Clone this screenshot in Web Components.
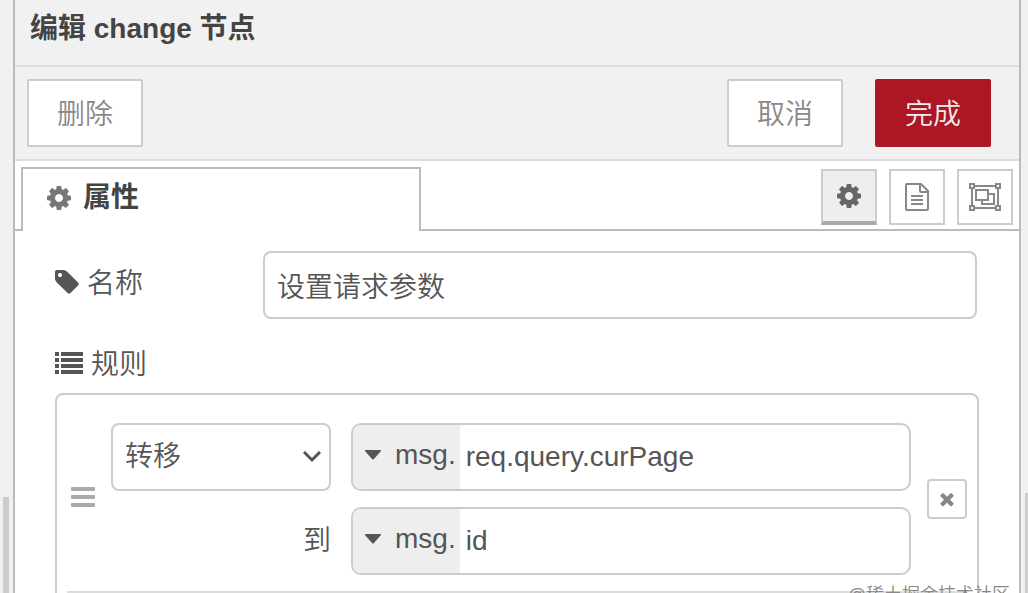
<!DOCTYPE html>
<html lang="zh-CN">
<head>
<meta charset="utf-8">
<meta name="viewport" content="width=device-width, initial-scale=1">
<title>编辑 change 节点</title>
<style>
  :root {
    --border-color: #ccc;
    --tab-border: #bbb;
    --bar-color: #f1f1f1;
    --text-color: #555;
    --strong-color: #444;
    --muted-color: #888;
    --primary-color: #ad1625;
    --text-weight: 350;
  }

  body {
    margin: 0;
    height: 100vh;
    overflow: hidden;
    font: 28px/40px "Liberation Sans", "Noto Sans CJK SC", sans-serif;
    color: var(--text-color);
    background: var(--bar-color);
  }
</style>
</head>
<body>
<editor-page></editor-page>

<script>
const COG = "M1152 896q0-106-75-181t-181-75-181 75-75 181 75 181 181 75 181-75 75-181zm512-109v222q0 12-8 23t-20 13l-185 28q-19 54-39 91 35 50 107 138 10 12 10 25t-9 23q-27 37-99 108t-94 71q-12 0-26-9l-138-108q-44 23-91 38-16 136-29 186-7 28-36 28h-222q-14 0-24.5-8.5t-11.5-21.5l-28-184q-49-16-90-37l-141 107q-10 9-25 9-14 0-25-11-126-114-165-168-7-10-7-23 0-12 8-23 15-21 51-66.5t54-70.5q-27-50-41-99l-183-27q-13-2-21-12.5t-8-23.5v-222q0-12 8-23t19-13l186-28q14-46 39-92-40-57-107-138-10-12-10-24 0-10 9-23 26-36 98.5-107.5t94.5-71.5q13 0 26 10l138 107q44-23 91-38 16-136 29-186 7-28 36-28h222q14 0 24.5 8.5t11.5 21.5l28 184q49 16 90 37l142-107q9-9 24-9 13 0 25 10 129 119 165 170 7 8 7 22 0 12-8 23-15 21-51 66.5t-54 70.5q26 50 41 98l183 28q13 2 21 12.5t8 23.5z";

// name: [width, height, viewBox, markup]
const ICONS = {
  cog: [24, 24, "128 128 1536 1536", `<path d="${COG}"/>`],
  tag: [24, 24, "128 128 1536 1536", `<path d="M576 448q0-53-37.5-90.5t-90.5-37.5-90.5 37.5-37.5 90.5 37.5 90.5 90.5 37.5 90.5-37.5 37.5-90.5zm1067 576q0 53-37 90l-491 492q-39 37-91 37-53 0-90-37l-715-716q-38-37-64.5-101t-26.5-117v-416q0-52 38-90t90-38h416q53 0 117 26.5t102 64.5l715 714q37 39 37 91z"/>`],
  list: [28, 22, "0 0 28 22", `<path d="M0 0h4v4H0zM6 0h22v4H6zM0 6h4v4H0zM6 6h22v4H6zM0 12h4v4H0zM6 12h22v4H6zM0 18h4v4H0zM6 18h22v4H6z"/>`],
  bars: [24, 28, "0 0 24 28", `<rect y="2" width="24" height="4" rx="1"/><rect y="10" width="24" height="4" rx="1"/><rect y="18" width="24" height="4" rx="1"/>`],
  caret: [16, 10, "0 0 16 10", `<path d="M0 0h16v1L9 9q-1 1-2 0L0 1z"/>`],
  chevron: [18, 12, "0 0 18 12", `<path d="M2 2l7 7 7-7" fill="none" stroke="currentColor" stroke-width="3" stroke-linecap="square"/>`],
  times: [20, 20, "0 0 1792 1792", `<path d="M1490 1322q0 40-28 68l-136 136q-28 28-68 28t-68-28l-294-294-294 294q-28 28-68 28t-68-28l-136-136q-28-28-28-68t28-68l294-294-294-294q-28-28-28-68t28-68l136-136q28-28 68-28t68 28l294 294 294-294q28-28 68-28t68 28l136 136q28 28 28 68t-28 68l-294 294 294 294q28 28 28 68z"/>`],
  file: [24, 28, "0 0 24 28", `<path d="M2 1h14l7 7v18q0 1-1 1H2q-1 0-1-1V2q0-1 1-1zM15 1v7q0 1 1 1h7M6 13h12M6 17h12M6 21h12" fill="none" stroke="currentColor" stroke-width="2"/>`],
  group: [32, 28, "0 0 32 28", `<path d="M1 1h4v4H1zM27 1h4v4h-4zM1 23h4v4H1zM27 23h4v4h-4zM5 3h22M5 25h22M3 5v18M29 5v18M7 7h12v10H7zM19 11h6v10H13v-4" fill="none" stroke="currentColor" stroke-width="2"/>`]
};

class FaIcon extends HTMLElement {
  constructor() {
    super();
    this.attachShadow({ mode: "open" });
  }
  connectedCallback() {
    const [width, height, box, markup] = ICONS[this.getAttribute("name")];
    this.shadowRoot.innerHTML = `
    <style>
      :host {
        display: block;
        flex: none;
      }
      svg {
        display: block;
        fill: currentColor;
      }
    </style>
    <svg width="${width}" height="${height}" viewBox="${box}" aria-hidden="true">${markup}</svg>
    `;
  }
}

class TrayButton extends HTMLElement {
  constructor() {
    super();
    this.attachShadow({ mode: "open" });
  }
  connectedCallback() {
    this.shadowRoot.innerHTML = `
    <style>
      :host {
        display: block;
      }
      button {
        display: block;
        box-sizing: border-box;
        height: 68px;
        padding: 4px 28px 0;
        border: 2px solid var(--border-color);
        border-radius: 2px;
        background: white;
        color: var(--muted-color);
        font: inherit;
        font-weight: var(--text-weight);
      }
      :host([primary]) button {
        border-color: var(--primary-color);
        background: var(--primary-color);
        color: #eee;
      }
    </style>
    <button type="button"><slot></slot></button>
    `;
  }
}

class TrayTabs extends HTMLElement {
  constructor() {
    super();
    this.attachShadow({ mode: "open" });
  }
  connectedCallback() {
    this.shadowRoot.innerHTML = `
    <style>
      :host {
        display: flex;
        align-items: flex-end;
        padding-top: 6px;
      }
      .edge {
        flex: none;
        box-sizing: border-box;
        width: 6px;
        border-bottom: 2px solid var(--tab-border);
      }
      .tab {
        flex: 0 1 400px;
        box-sizing: border-box;
        display: flex;
        align-items: center;
        gap: 12px;
        height: 64px;
        padding: 0 24px 4px;
        border: 2px solid var(--tab-border);
        border-bottom: 0;
        background: white;
        color: var(--strong-color);
        font: inherit;
        font-weight: bold;
      }
      .tab fa-icon {
        color: #777;
      }
      .tools {
        flex: 1;
        display: flex;
        justify-content: flex-end;
        gap: 12px;
        padding: 0 6px 4px 0;
        border-bottom: 2px solid var(--tab-border);
      }
      .tools button {
        box-sizing: border-box;
        display: flex;
        align-items: center;
        justify-content: center;
        width: 56px;
        height: 56px;
        padding: 0;
        border: 2px solid var(--border-color);
        background: white;
        color: var(--muted-color);
      }
      .tools .selected {
        border-bottom: 4px solid #aaa;
        background: #eee;
        color: #666;
      }
    </style>
    <span class="edge"></span>
    <button type="button" class="tab"><fa-icon name="cog"></fa-icon>属性</button>
    <div class="tools">
      <button type="button" class="selected" aria-label="properties"><fa-icon name="cog"></fa-icon></button>
      <button type="button" aria-label="description"><fa-icon name="file"></fa-icon></button>
      <button type="button" aria-label="appearance"><fa-icon name="group"></fa-icon></button>
    </div>
    `;
  }
}

class NameRow extends HTMLElement {
  constructor() {
    super();
    this.attachShadow({ mode: "open" });
  }
  connectedCallback() {
    this.shadowRoot.innerHTML = `
    <style>
      :host {
        display: flex;
        font-weight: var(--text-weight);
      }
      label {
        flex: none;
        display: flex;
        align-items: center;
        gap: 8px;
        width: 208px;
        height: 62px;
        line-height: 44px;
      }
      label span {
        padding-top: 4px;
      }
      input {
        flex: 1;
        min-width: 0;
        box-sizing: border-box;
        height: 68px;
        padding: 0 12px;
        border: 2px solid var(--border-color);
        border-radius: 8px;
        background: white;
        color: inherit;
        font: inherit;
      }
    </style>
    <label for="name"><fa-icon name="tag"></fa-icon><span>名称</span></label>
    <input type="text" id="name" value="${this.getAttribute("value")}">
    `;
  }
}

class TypedInput extends HTMLElement {
  constructor() {
    super();
    this.attachShadow({ mode: "open" });
  }
  connectedCallback() {
    this.shadowRoot.innerHTML = `
    <style>
      :host {
        display: flex;
        align-items: stretch;
        box-sizing: border-box;
        height: 68px;
        border: 2px solid var(--border-color);
        border-radius: 10px;
        overflow: hidden;
        background: white;
      }
      button {
        flex: none;
        display: flex;
        align-items: center;
        gap: 14px;
        padding: 0 4px 4px 12px;
        border: 0;
        background: #eee;
        color: inherit;
        font: inherit;
      }
      input {
        flex: 1;
        min-width: 0;
        padding: 0 6px;
        border: 0;
        background: none;
        color: inherit;
        font: inherit;
      }
    </style>
    <button type="button"><fa-icon name="caret"></fa-icon>msg.</button>
    <input type="text" aria-label="${this.getAttribute("label")}" value="${this.getAttribute("value")}">
    `;
  }
}

class RuleItem extends HTMLElement {
  constructor() {
    super();
    this.attachShadow({ mode: "open" });
  }
  connectedCallback() {
    this.shadowRoot.innerHTML = `
    <style>
      :host {
        display: flex;
        align-items: center;
        gap: 16px;
        margin: 0 10px;
        padding: 28px 0 16px 4px;
        border-bottom: 2px solid #ddd;
        font-weight: var(--text-weight);
      }
      .handle {
        color: #aaa;
      }
      .fields {
        flex: 1;
        display: grid;
        grid-template-columns: 220px 1fr;
        gap: 16px 20px;
        align-items: center;
      }
      .pick {
        display: grid;
        align-items: center;
      }
      .pick > * {
        grid-area: 1 / 1;
      }
      .pick fa-icon {
        justify-self: end;
        margin-right: 10px;
        pointer-events: none;
      }
      select {
        box-sizing: border-box;
        width: 100%;
        height: 68px;
        padding: 0 12px;
        border: 2px solid var(--border-color);
        border-radius: 8px;
        background: white;
        color: inherit;
        font: inherit;
        appearance: none;
      }
      .to {
        text-align: right;
      }
      .remove {
        display: flex;
        align-items: center;
        justify-content: center;
        box-sizing: border-box;
        width: 40px;
        height: 40px;
        padding: 0;
        border: 2px solid var(--border-color);
        border-radius: 4px;
        background: white;
        color: var(--muted-color);
      }
    </style>
    <fa-icon class="handle" name="bars"></fa-icon>
    <div class="fields">
      <div class="pick">
        <select aria-label="规则">
          <option>转移</option>
        </select>
        <fa-icon name="chevron"></fa-icon>
      </div>
      <typed-input label="转移" value="req.query.curPage"></typed-input>
      <span class="to">到</span>
      <typed-input label="到" value="id"></typed-input>
    </div>
    <button type="button" class="remove" aria-label="remove"><fa-icon name="times"></fa-icon></button>
    `;
  }
}

class RuleList extends HTMLElement {
  constructor() {
    super();
    this.attachShadow({ mode: "open" });
  }
  connectedCallback() {
    this.shadowRoot.innerHTML = `
    <style>
      :host {
        display: block;
      }
      .title {
        display: flex;
        align-items: center;
        gap: 8px;
        height: 60px;
        line-height: 44px;
        font-weight: var(--text-weight);
      }
      .title span {
        padding-top: 4px;
      }
      .box {
        margin-right: -2px;
        min-height: 400px;
        border: 2px solid var(--border-color);
        border-radius: 8px;
      }
    </style>
    <div class="title"><fa-icon name="list"></fa-icon><span>规则</span></div>
    <div class="box"><slot></slot></div>
    `;
  }
}

class EditTray extends HTMLElement {
  constructor() {
    super();
    this.attachShadow({ mode: "open" });
  }
  connectedCallback() {
    this.shadowRoot.innerHTML = `
    <style>
      :host {
        display: block;
        overflow: hidden;
        background: white;
        border: solid var(--tab-border);
        border-width: 0 2px;
      }
      header {
        box-sizing: border-box;
        height: 67px;
        padding: 9px 15px;
        border-bottom: 2px solid #ddd;
        background: var(--bar-color);
      }
      h1 {
        margin: 0;
        color: var(--strong-color);
        font-size: 28px;
        line-height: 40px;
      }
      .toolbar {
        display: flex;
        gap: 32px;
        padding: 12px 28px 12px 12px;
        border-bottom: 2px solid #ddd;
        background: var(--bar-color);
      }
      .toolbar :first-child {
        margin-right: auto;
      }
      form {
        display: flex;
        flex-direction: column;
        gap: 14px;
        padding: 20px 42px 0 40px;
      }
    </style>
    <header><h1>编辑 change 节点</h1></header>
    <div class="toolbar">
      <tray-button>删除</tray-button>
      <tray-button>取消</tray-button>
      <tray-button primary>完成</tray-button>
    </div>
    <tray-tabs></tray-tabs>
    <form>
      <name-row value="设置请求参数"></name-row>
      <rule-list><rule-item></rule-item></rule-list>
    </form>
    `;
  }
}

class EditorPage extends HTMLElement {
  constructor() {
    super();
    this.attachShadow({ mode: "open" });
  }
  connectedCallback() {
    this.shadowRoot.innerHTML = `
    <style>
      :host {
        display: flex;
        position: relative;
        height: 100%;
      }
      .gutter {
        flex: none;
        display: flex;
        align-items: flex-end;
        justify-content: flex-end;
        box-sizing: border-box;
        width: 13px;
        padding-right: 4px;
      }
      .gutter.right {
        width: 7px;
        padding: 0;
      }
      .thumb {
        width: 6px;
        height: 96px;
        background: #ccc;
      }
      .right .thumb {
        width: 3px;
        height: 100px;
      }
      edit-tray {
        flex: 1;
        min-width: 0;
      }
      .mark {
        position: absolute;
        right: 18px;
        bottom: -16px;
        color: #888;
        font-size: 18px;
        line-height: 28px;
        font-weight: var(--text-weight);
      }
    </style>
    <div class="gutter"><div class="thumb"></div></div>
    <edit-tray></edit-tray>
    <div class="gutter right"><div class="thumb"></div></div>
    <span class="mark">@稀土掘金技术社区</span>
    `;
  }
}

customElements.define("fa-icon", FaIcon);
customElements.define("tray-button", TrayButton);
customElements.define("tray-tabs", TrayTabs);
customElements.define("name-row", NameRow);
customElements.define("typed-input", TypedInput);
customElements.define("rule-item", RuleItem);
customElements.define("rule-list", RuleList);
customElements.define("edit-tray", EditTray);
customElements.define("editor-page", EditorPage);
</script>
</body>
</html>
